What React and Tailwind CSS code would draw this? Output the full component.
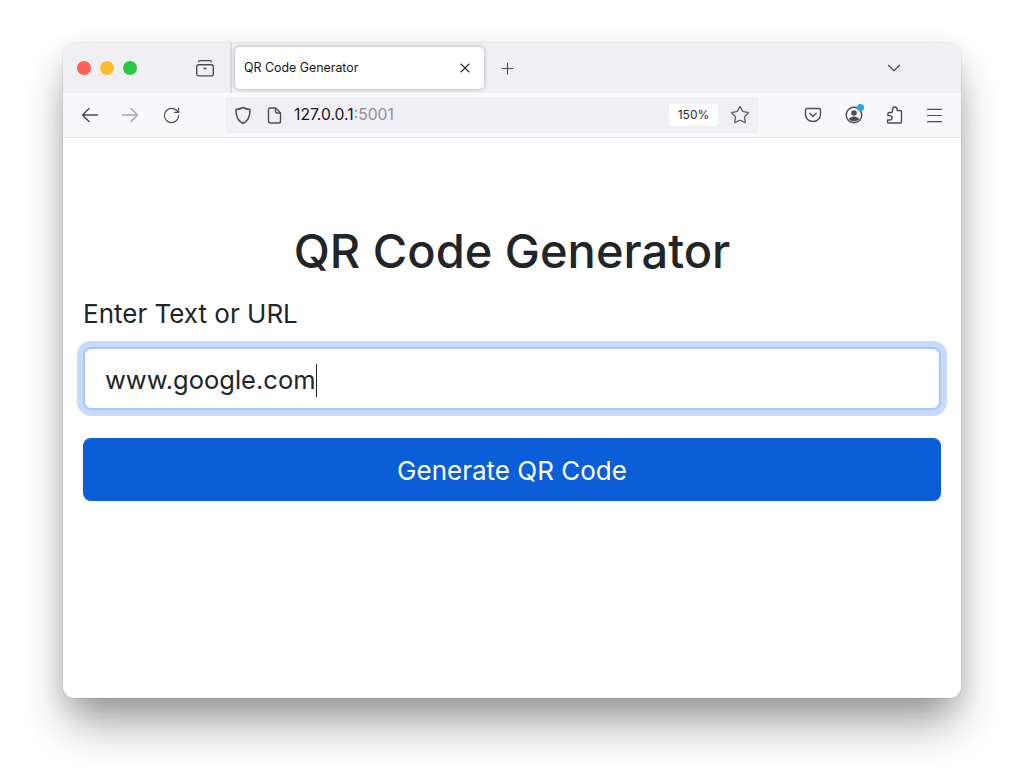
import { Plus, X, ChevronDown, RotateCw, Menu, Star } from 'lucide-react';

function TabsIcon() {
    return (
        <svg width="20" height="18" viewBox="0 0 20 18" fill="none" stroke="#4c4c52" strokeWidth="1.4">
            <rect x="1.7" y="5.7" width="16.6" height="11.2" rx="2" />
            <path d="M3.5 3.2c0-1 .7-1.6 1.6-1.6h9.8c.9 0 1.6.6 1.6 1.6" />
            <path d="M8.5 9.5h3" />
        </svg>
    );
}

function Arrow({ color, flip }) {
    return (
        <svg width="18" height="16" viewBox="0 0 18 16" fill="none" stroke={color} strokeWidth="1.5" strokeLinecap="round" strokeLinejoin="round" className={flip ? 'rotate-180' : ''}>
            <path d="M1.500 8h15M8 1.500 1.500 8 8 14.500" />
        </svg>
    );
}

function ShieldIcon() {
    return (
        <svg width="18" height="19" viewBox="0 0 18 19" fill="none" stroke="#4c4c52" strokeWidth="1.5">
            <path d="M9 1.500c2.200 1.200 4.600 1.800 7 2 .2 6.400-1.800 11.300-7 14-5.200-2.700-7.200-7.600-7-14 2.400-.2 4.800-.8 7-2z" strokeLinejoin="round" />
        </svg>
    );
}

function PageIcon() {
    return (
        <svg width="15" height="17" viewBox="0 0 15 17" fill="none" stroke="#4c4c52" strokeWidth="1.4">
            <path d="M3 1h5.500L13.500 6v8.200c0 1-.8 1.800-1.800 1.800H3.300c-1 0-1.800-.8-1.800-1.800V2.800C1.500 1.800 2 1 3 1z" strokeLinejoin="round" />
            <path d="M8.500 1v3.500c0 .9.600 1.500 1.500 1.500h3.500" />
        </svg>
    );
}

function PocketIcon() {
    return (
        <svg width="18" height="16" viewBox="0 0 18 16" fill="none" stroke="#4c4c52" strokeWidth="1.4">
            <path d="M3 1.500h12c.9 0 1.500.6 1.500 1.500v4.500c0 4-3.300 7-7.500 7s-7.500-3-7.500-7V3c0-.9.600-1.500 1.500-1.500z" />
            <path d="M5.800 6.300 9 9.400l3.200-3.100" strokeLinecap="round" strokeLinejoin="round" />
        </svg>
    );
}

function AccountIcon() {
    return (
        <span className="relative flex">
            <svg width="18" height="18" viewBox="0 0 18 18" fill="none">
                <circle cx="9" cy="9" r="7.800" stroke="#4c4c52" strokeWidth="1.400" />
                <circle cx="9" cy="7" r="2.800" fill="#4c4c52" />
                <path d="M3.800 13c1-1.800 3-2.600 5.200-2.600s4.200.8 5.200 2.600c-1.300 1.500-3.100 2.300-5.200 2.300s-3.900-.8-5.200-2.300z" fill="#4c4c52" />
            </svg>
            <span className="absolute -top-[2px] -right-[1px] w-[7px] h-[7px] rounded-full bg-[#1fa9e6]" />
        </span>
    );
}

function ExtensionIcon() {
    return (
        <svg width="17" height="18" viewBox="0 0 17 18" fill="none" stroke="#4c4c52" strokeWidth="1.400" strokeLinejoin="round">
            <path d="M6.500 4.500V3.300a2.300 2.300 0 0 1 4.600 0v1.200h3.200c.7 0 1.200.5 1.200 1.200v10.100c0 .7-.5 1.200-1.200 1.200H2.700c-.7 0-1.200-.5-1.200-1.200v-1.800h2.200c1.300 0 2.300-1 2.300-2.200S5 9.600 3.700 9.600H1.900V7.700c0-.7.500-1.200 1.200-1.200h2.200c.7 0 1.200-.5 1.200-1.200z" />
        </svg>
    );
}

export default function App() {
    return (
        <div className="w-[1024px] h-[782px] overflow-hidden bg-white pl-[63px] pt-[43px] font-['Inter',sans-serif]">
            <div className="w-[898px] h-[655px] rounded-[11px] overflow-hidden bg-white flex flex-col shadow-[0_30px_45px_-6px_rgba(0,0,0,0.38),0_0_0_1px_rgba(0,0,0,0.05),0_6px_24px_rgba(0,0,0,0.1)]">
                {/* Tab strip */}
                <div className="h-[50px] bg-[#f0f0f4] flex items-center shrink-0">
                    <div className="flex items-center gap-[9px] pl-[14px] w-[132px] h-full">
                        <span className="w-[14px] h-[14px] rounded-full bg-[#fb5f57]" />
                        <span className="w-[14px] h-[14px] rounded-full bg-[#fdbc2e]" />
                        <span className="w-[14px] h-[14px] rounded-full bg-[#28c83f]" />
                    </div>
                    <div className="w-[20px] flex justify-center mr-[15px]"><TabsIcon /></div>
                    <div className="w-[2px] h-full bg-[#d9d9de]" />
                    <div className="ml-[3px] w-[249px] h-[42px] bg-white rounded-[5px] shadow-[0_0_4px_rgba(0,0,0,0.3)] flex items-center justify-between pl-[9px] pr-[11px]">
                        <span className="text-[12.400px] text-[#15141a]">QR Code Generator</span>
                        <X size={16} strokeWidth={1.700} color="#2b2a33" />
                    </div>
                    <Plus size={19} strokeWidth={1.400} color="#4c4c52" className="ml-[14px]" />
                    <ChevronDown size={22} strokeWidth={1.400} color="#4c4c52" className="ml-[366px]" />
                </div>

                {/* Toolbar */}
                <div className="h-[45px] bg-[#f9f9fb] border-b border-[#e0e0e4] flex items-center shrink-0">
                    <span className="ml-[18px] flex"><Arrow color="#4c4c52" /></span>
                    <span className="ml-[22px] flex"><Arrow color="#a9a9ae" flip /></span>
                    <RotateCw size={19} strokeWidth={1.500} color="#4c4c52" className="ml-[23px]" />
                    <div className="ml-[44px] w-[534px] h-[36px] bg-[#f0f0f4] rounded-[4px] flex items-center px-[9px]">
                        <ShieldIcon />
                        <span className="ml-[15px] flex"><PageIcon /></span>
                        <span className="ml-[12px] text-[15.700px] text-[#15141a]">127.0.0.1<span className="text-[#8f8f94]">:5001</span></span>
                        <span className="ml-auto w-[49px] h-[22px] bg-white rounded-[4px] flex items-center justify-center text-[12px] text-[#2b2a33]">150%</span>
                        <Star size={20} strokeWidth={1.400} color="#4c4c52" className="ml-[12px]" />
                    </div>
                    <div className="ml-[45px] flex items-center gap-[23px]">
                        <PocketIcon />
                        <AccountIcon />
                        <ExtensionIcon />
                        <Menu size={21} strokeWidth={1.300} color="#4c4c52" className="-ml-[2px]" />
                    </div>
                </div>

                {/* Page */}
                <div className="flex-1 px-[20px] pt-[83px] flex flex-col">
                    <h1 className="text-center text-[47px] leading-[60px] font-medium text-[#212529]">QR Code Generator</h1>
                    <label className="mt-[15px] text-[26px] leading-[36px] text-[#212529]">Enter Text or URL</label>
                    <div className="mt-[15px] h-[63px] rounded-[8px] border-2 border-[#a6c8f8] bg-white shadow-[0_0_0_6px_#c6dbfb] flex items-center pl-[20px] pt-[3px] text-[25.500px] text-[#212529]">
                        www.google.com
                        <span className="w-[1.500px] h-[33px] bg-[#212529]" />
                    </div>
                    <button className="mt-[28px] h-[63px] pt-[2px] rounded-[8px] bg-[#0b5ed7] text-white text-[26px]">Generate QR Code</button>
                </div>
            </div>
        </div>
    );
}
